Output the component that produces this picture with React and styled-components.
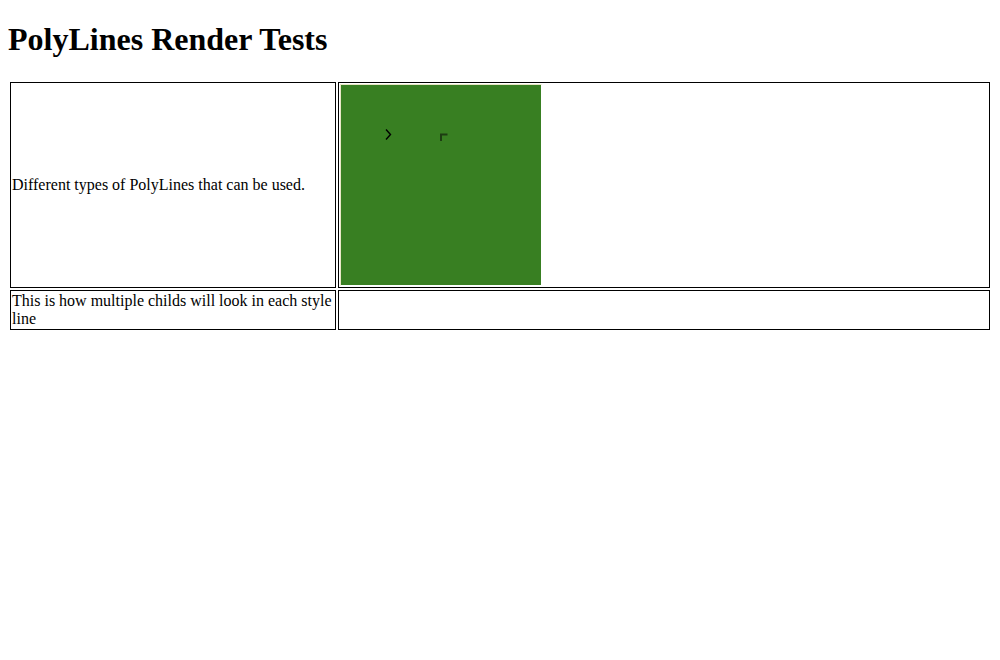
import styled, { createGlobalStyle } from "styled-components";

const GlobalStyle = createGlobalStyle`
    body {
        margin: 8px;
        font-family: "Liberation Serif", "Times New Roman", serif;
        font-size: 16px;
        color: #000;
        background: #fff;
    }
`

const Title = styled.h1`
    font-size: 32px;
    font-weight: bold;
    margin: 13.44px 0 21.44px;
    line-height: normal;
`

const Table = styled.table`
    width: 100%;
    border-collapse: separate;
    border-spacing: 2px;
    table-layout: fixed;
`

const Cell = styled.td`
    border: 1px solid #000;
    padding: 1px;
    vertical-align: middle;
    width: ${props => props.$width || "auto"};
    line-height: 18px;
`

const Canvas = styled.div`
    width: 200px;
    height: 200px;
    background: #387f22;
    border: 1px solid #e9e7c6;
    border-right-color: #fff;
    border-bottom-color: #fff;
    display: block;
`

export default function App() {
    return (
        <>
            <GlobalStyle />
            <Title>PolyLines Render Tests</Title>
            <Table>
                <tbody>
                    <tr>
                        <Cell $width="322px">Different types of PolyLines that can be used.</Cell>
                        <Cell>
                            <Canvas>
                                <svg width="200" height="200" viewBox="0 0 200 200">
                                    <polyline points="45,44.5 49.5,49.5 45,54.5" fill="none" stroke="#000" strokeWidth="1.4" />
                                    <polyline points="100,56 100,49.5 106.5,49.5" fill="none" stroke="#1d3d12" strokeWidth="2" />
                                </svg>
                            </Canvas>
                        </Cell>
                    </tr>
                    <tr>
                        <Cell>This is how multiple childs will look in each style line</Cell>
                        <Cell></Cell>
                    </tr>
                </tbody>
            </Table>
        </>
    )
}
